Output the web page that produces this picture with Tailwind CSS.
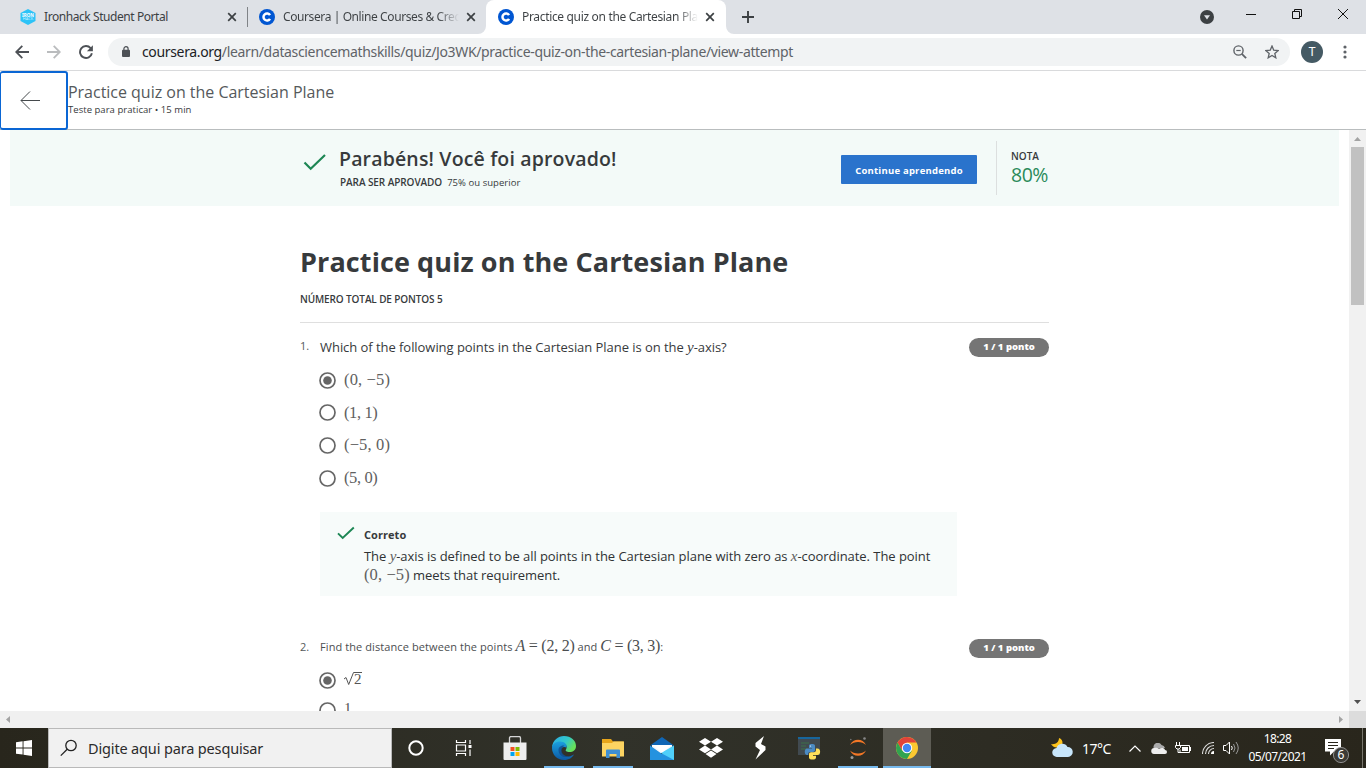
<!DOCTYPE html>
<html lang="pt-BR">
<head>
<meta charset="utf-8">
<title>Practice quiz on the Cartesian Plane</title>
<script src="https://cdn.jsdelivr.net/npm/@tailwindcss/browser@4"></script>
</head>
<body class="w-[1366px] h-[768px] overflow-hidden bg-white font-['Open_Sans',sans-serif] text-[#373a3c] flex flex-col whitespace-nowrap">

<!-- Tab strip -->
<div class="h-[34px] shrink-0 bg-[#dee1e6] flex text-[12px] text-[#3c4043] font-['Noto_Sans',sans-serif]">
  <div class="w-[248px] flex items-center pl-5 relative">
    <svg class="w-4 h-4" viewBox="0 0 16 16"><path d="M8 0l7.5 4v8L8 16 .5 12V4z" fill="#2dc3f7"/><text x="8" y="7.6" font-size="4.5" font-weight="700" text-anchor="middle" fill="#fff">IRON</text><text x="8" y="11.4" font-size="4" text-anchor="middle" fill="#c9f0ff">HACK</text></svg>
    <span class="ml-2 w-[180px] tracking-[-0.43px]">Ironhack Student Portal</span>
    <svg class="w-[10px] h-[10px] ml-[3px]" viewBox="0 0 10 10"><path d="M1.2 1.2l7.6 7.6M8.8 1.2L1.2 8.8" stroke="#3c4043" stroke-width="1.7"/></svg>
    <i class="absolute right-0 top-[7px] w-px h-5 bg-[#808387]"></i>
  </div>
  <div class="w-[238px] flex items-center pl-[11px]">
    <svg class="w-4 h-4" viewBox="0 0 16 16"><circle cx="8" cy="8" r="8" fill="#0056d2"/><path d="M11 6.2A3.5 3.5 0 1 0 11 9.8" fill="none" stroke="#fff" stroke-width="2.5"/></svg>
    <span class="ml-2 w-[176px] overflow-hidden tracking-[-0.4px] bg-linear-to-r from-[#3c4043] from-88% to-transparent bg-clip-text text-transparent">Coursera | Online Courses &amp; Credentials</span>
    <svg class="w-[10px] h-[10px] ml-[7px]" viewBox="0 0 10 10"><path d="M1.2 1.2l7.6 7.6M8.8 1.2L1.2 8.8" stroke="#3c4043" stroke-width="1.7"/></svg>
  </div>
  <div class="w-[240px] flex items-center pl-3 bg-white rounded-t-lg relative">
    <svg class="absolute -left-2 bottom-0 w-2 h-2" viewBox="0 0 8 8"><path d="M8 0v8H0a8 8 0 0 0 8-8" fill="#fff"/></svg>
    <svg class="absolute -right-2 bottom-0 w-2 h-2" viewBox="0 0 8 8"><path d="M0 0v8h8A8 8 0 0 1 0 0" fill="#fff"/></svg>
    <svg class="w-4 h-4" viewBox="0 0 16 16"><circle cx="8" cy="8" r="8" fill="#0056d2"/><path d="M11 6.2A3.5 3.5 0 1 0 11 9.8" fill="none" stroke="#fff" stroke-width="2.5"/></svg>
    <span class="ml-2 w-[176px] overflow-hidden tracking-[-0.33px] bg-linear-to-r from-[#3c4043] from-88% to-transparent bg-clip-text text-transparent">Practice quiz on the Cartesian Plane</span>
    <svg class="w-[10px] h-[10px] ml-[7px]" viewBox="0 0 10 10"><path d="M1.2 1.2l7.6 7.6M8.8 1.2L1.2 8.8" stroke="#3c4043" stroke-width="1.7"/></svg>
  </div>
  <svg class="w-3 h-3 ml-4 mt-[11px]" viewBox="0 0 12 12"><path d="M6 0v12M0 6h12" stroke="#3c4043" stroke-width="1.9"/></svg>
  <svg class="ml-auto w-[14px] h-[14px] mt-[10px]" viewBox="0 0 14 14"><circle cx="7" cy="7" r="7" fill="#3c4043"/><path d="M4 5.2h6L7 9.6z" fill="#dee1e6"/></svg>
  <svg class="ml-8 w-[10px] h-[10px] mt-[9px]" viewBox="0 0 10 10"><path d="M0 5.5h10" stroke="#111"/></svg>
  <svg class="ml-9 w-[10px] h-[10px] mt-[9px]" viewBox="0 0 10 10"><path d="M.5 2.5h7v7h-7zM2.500 2.500v-2h7v7h-2" fill="none" stroke="#111"/></svg>
  <svg class="ml-9 mr-[18px] w-[10px] h-[10px] mt-[9px]" viewBox="0 0 10 10"><path d="M0 0l10 10M10 0L0 10" stroke="#111"/></svg>
</div>

<!-- Toolbar -->
<div class="h-[37px] shrink-0 border-b border-[#d9dadc] flex items-center pl-[15px]">
  <svg class="w-[14px] h-[14px]" viewBox="0 0 14 14"><path d="M14 7H1.500M7.300 .9L1.200 7l6.100 6.100" fill="none" stroke="#4d5156" stroke-width="1.8"/></svg>
  <svg class="w-[14px] h-[14px] ml-[18px]" viewBox="0 0 14 14"><path d="M0 7h12.500M6.700 .9L12.800 7l-6.100 6.100" fill="none" stroke="#babcbe" stroke-width="1.8"/></svg>
  <svg class="w-[14px] h-[14px] ml-[18px]" viewBox="0 0 14 14"><path d="M11.600 3.100A6 6 0 1 0 12.900 8.300" fill="none" stroke="#4d5156" stroke-width="1.9"/><path d="M13.900 .3v6H7.900z" fill="#4d5156"/></svg>
  <div class="ml-[15px] w-[1182px] h-7 rounded-full bg-[#f1f3f4] flex items-center pl-[14px]">
    <svg class="w-2 h-[11px] -mt-px" viewBox="0 0 8 11"><rect y="3.800" width="8" height="7.200" rx="1" fill="#4d5156"/><path d="M1.900 4V2.800a2.100 2.100 0 0 1 4.200 0V4" fill="none" stroke="#4d5156" stroke-width="1.200"/></svg>
    <span class="ml-3 -mt-px text-[14px] text-[#5f6368] font-['Noto_Sans',sans-serif] tracking-[-0.35px]"><span class="text-[#202124]">coursera.org</span>/learn/datasciencemathskills/quiz/Jo3WK/practice-quiz-on-the-cartesian-plane/view-attempt</span>
    <svg class="ml-auto w-[14px] h-[14px]" viewBox="0 0 14 14"><circle cx="5.500" cy="5.500" r="4.600" fill="none" stroke="#5f6368" stroke-width="1.400"/><path d="M8.800 8.800l4.300 4.300" stroke="#5f6368" stroke-width="1.800"/><path d="M3.300 5.500h4.400" stroke="#5f6368" stroke-width="1.200"/></svg>
    <svg class="ml-[18px] mr-[11px] w-[14px] h-[14px]" viewBox="0 0 14 14"><path d="M7 1l1.700 4.100 4.500.4-3.400 2.900 1 4.400L7 10.500l-3.800 2.300 1-4.400L.8 5.500l4.500-.4z" fill="none" stroke="#5f6368" stroke-width="1.300"/></svg>
  </div>
  <div class="ml-[11px] w-[22px] h-[22px] rounded-full bg-[#455a64] text-white text-[12px] flex items-center justify-center font-['Roboto',sans-serif]">T</div>
  <svg class="ml-5 w-1 h-[14px]" viewBox="0 0 4 14"><circle cx="2" cy="2" r="1.600" fill="#5f6368"/><circle cx="2" cy="7" r="1.600" fill="#5f6368"/><circle cx="2" cy="12" r="1.600" fill="#5f6368"/></svg>
</div>

<!-- Item header -->
<div class="h-[59px] shrink-0 border-b border-[#b9bdbe] flex">
  <div class="w-[68px] h-[59px] shrink-0 border-2 border-l-[1px] border-[#0a66d4] rounded-[3px] flex items-center justify-center pr-[8px] pb-[2px]">
    <svg class="w-5 h-5" viewBox="0 0 20 20"><path d="M20 10.500H1M10 1.500L1 10.500l9 9" fill="none" stroke="#45494c" stroke-width="1"/></svg>
  </div>
  <div class="flex flex-col pt-[10px]">
    <div class="h-[22px] leading-[22px] text-[16px] text-[#55595b] tracking-[-0.02px]">Practice quiz on the Cartesian Plane</div>
    <div class="h-[13px] leading-[13px] text-[9.500px] tracking-[0.04px] text-[#373a3c]">Teste para praticar • 15 min</div>
  </div>
</div>

<!-- Scrollable page -->
<div class="h-[581px] shrink-0 flex">
  <main class="w-[1349px] h-[581px] overflow-hidden">
    <section class="ml-[10px] w-[1329px] h-[76px] bg-[#f3faf8] flex pl-[293px]">
      <svg class="w-[24px] h-[20px] mt-[23px]" viewBox="0 0 24 20"><path d="M1.500 9.500l6.200 6.200L22 2" fill="none" stroke="#1d8654" stroke-width="2.200"/></svg>
      <div class="ml-[12px] w-[502px] pt-4">
        <h2 class="text-[19.500px] leading-[26px] font-semibold tracking-[0.16px]">Parabéns! Você foi aprovado!</h2>
        <p class="ml-px text-[10px] leading-[21px] tracking-[-0.08px]"><b class="font-semibold">PARA SER APROVADO</b><span class="ml-[5px] text-[9.500px] tracking-[0.05px]">75% ou superior</span></p>
      </div>
      <button class="mt-[25px] w-[136px] h-[29px] bg-[#2a73cc] rounded-[1px] text-white font-bold text-[9.500px] tracking-[0.22px] pt-[3px]">Continue aprendendo</button>
      <div class="ml-[19px] mt-[11px] h-[54px] border-l border-[#dcdfdf] pl-[14px]">
        <div class="mt-[8px] text-[10px] leading-[14px] font-semibold">NOTA</div>
        <div class="text-[19.500px] leading-[24px] text-[#2a8a5a] tracking-[-0.5px]">80%</div>
      </div>
    </section>

    <article class="ml-[300px] w-[749px]">
      <h1 class="pt-[36px] h-[76px] text-[27px] leading-[40px] font-bold tracking-[0.1px]">Practice quiz on the Cartesian Plane</h1>
      <div class="h-[41px] pt-[10px] border-b border-[#dfdfdf] text-[10px] leading-[14px] font-semibold tracking-[-0.12px]">NÚMERO TOTAL DE PONTOS 5</div>

      <section class="flex h-[300px]">
        <div class="w-5 pt-[15px] text-[11px] leading-[16px] text-[#55595b]">1.</div>
        <div class="w-[649px] pt-[14px]">
          <p class="h-[20px] leading-[20px] text-[13px] tracking-[-0.05px]">Which of the following points in the Cartesian Plane is on the <i class="font-['Liberation_Serif',serif] text-[15px]">y</i>-axis?</p>
          <div class="-ml-px pt-[7px] font-['Liberation_Serif',serif] text-[16.500px] text-[#606060]">
            <div class="h-[32.600px] flex items-center"><svg class="w-[17px] h-[17px] mr-2" viewBox="0 0 17 17"><circle cx="8.500" cy="8.500" r="7.500" fill="none" stroke="#666" stroke-width="1.700"/><circle cx="8.500" cy="8.500" r="4.300" fill="#666"/></svg><span class="tracking-[0.15px]">(0, −5)</span></div>
            <div class="h-[32.600px] flex items-center"><svg class="w-[17px] h-[17px] mr-2" viewBox="0 0 17 17"><circle cx="8.500" cy="8.500" r="7.500" fill="none" stroke="#666" stroke-width="1.700"/></svg><span class="tracking-[-0.4px]">(1, 1)</span></div>
            <div class="h-[32.600px] flex items-center"><svg class="w-[17px] h-[17px] mr-2" viewBox="0 0 17 17"><circle cx="8.500" cy="8.500" r="7.500" fill="none" stroke="#666" stroke-width="1.700"/></svg><span class="tracking-[0.15px]">(−5, 0)</span></div>
            <div class="h-[32.600px] flex items-center"><svg class="w-[17px] h-[17px] mr-2" viewBox="0 0 17 17"><circle cx="8.500" cy="8.500" r="7.500" fill="none" stroke="#666" stroke-width="1.700"/></svg><span class="tracking-[-0.4px]">(5, 0)</span></div>
          </div>
          <div class="mt-[18px] w-[637px] h-[84px] bg-[#f7fbfa] flex pl-[17px]">
            <svg class="w-[18px] h-[15px] mt-[14px]" viewBox="0 0 18 15"><path d="M1 7.300l4.700 4.700L16.800 1.500" fill="none" stroke="#1d8654" stroke-width="1.900"/></svg>
            <div class="ml-[9px] pt-[14px]">
              <div class="h-[21px] leading-[18px] text-[11px] font-bold tracking-[0.05px]">Correto</div>
              <p class="leading-[19px] text-[13px] text-[#2f3234] tracking-[-0.06px]"><span class="tracking-[-0.05px]">The <i class="font-['Liberation_Serif',serif] text-[15px] leading-none text-[#606060]">y</i>-axis is defined to be all points in the Cartesian plane with zero as <i class="font-['Liberation_Serif',serif] text-[15px] leading-none text-[#606060]">x</i>-coordinate. The point</span><br><span class="font-['Liberation_Serif',serif] text-[16.500px] leading-none text-[#606060] tracking-[0.1px]">(0, −5)</span> meets that requirement.</p>
            </div>
          </div>
        </div>
        <div class="mt-[15px] w-[80px] h-[19px] rounded-full bg-[#757575] text-white text-[9.500px] leading-[18px] font-extrabold text-center">1 / 1 ponto</div>
      </section>

      <section class="flex h-[100px]">
        <div class="w-5 pt-[16px] text-[11px] leading-[16px] text-[#55595b]">2.</div>
        <div class="w-[649px] pt-[14px]">
          <p class="h-[20px] leading-[20px] text-[11px] text-[#4b4e50] tracking-[0.09px]">Find the distance between the points <span class="font-['Liberation_Serif',serif] text-[16px] leading-none tracking-[-0.25px]"><i>A</i> = (2, 2)</span> and <span class="font-['Liberation_Serif',serif] text-[16px] leading-none tracking-[-0.25px]"><i>C</i> = (3, 3)</span>:</p>
          <div class="-ml-px pt-[8px] font-['Liberation_Serif',serif] text-[15px] text-[#555]">
            <div class="h-[31px] flex items-center"><svg class="w-[17px] h-[17px] mr-2" viewBox="0 0 17 17"><circle cx="8.500" cy="8.500" r="7.500" fill="none" stroke="#666" stroke-width="1.700"/><circle cx="8.500" cy="8.500" r="4.300" fill="#666"/></svg><svg class="w-[10px] h-[13px] mb-[4px]" viewBox="0 0 10 13"><path d="M0 7l2-1.500L4.700 12.500 9.500 .5h.5" fill="none" stroke="#555" stroke-width="1"/></svg><span class="border-t border-[#555] leading-[12px] h-[13px] mb-[4px]">2</span></div>
            <div class="h-[31px] flex items-center pb-[2px]"><svg class="w-[17px] h-[17px] mr-2" viewBox="0 0 17 17"><circle cx="8.500" cy="8.500" r="7.500" fill="none" stroke="#666" stroke-width="1.700"/></svg><span class="mb-[4px]">1</span></div>
          </div>
        </div>
        <div class="mt-[16px] w-[80px] h-[19px] rounded-full bg-[#757575] text-white text-[9.500px] leading-[18px] font-extrabold text-center">1 / 1 ponto</div>
      </section>
    </article>
  </main>
  <div class="w-[17px] bg-[#f1f1f1] flex flex-col items-center">
    <svg class="w-[17px] h-[17px]" viewBox="0 0 17 17"><path d="M5 11l3.500-4 3.500 4z" fill="#a3a3a3"/></svg>
    <div class="w-[13px] h-[158px] bg-[#c1c1c1]"></div>
    <svg class="w-[17px] h-[17px] mt-auto" viewBox="0 0 17 17"><path d="M5 6l3.500 4L12 6z" fill="#505050"/></svg>
  </div>
</div>

<!-- Horizontal scrollbar -->
<div class="h-[17px] shrink-0 bg-[#f0f0f0] flex justify-between">
  <svg class="w-[17px] h-[17px]" viewBox="0 0 17 17"><path d="M10 5L6 8.500l4 3.500z" fill="#a3a3a3"/></svg>
  <div class="flex"><svg class="w-[17px] h-[17px]" viewBox="0 0 17 17"><path d="M7 5l4 3.500L7 12z" fill="#a3a3a3"/></svg><div class="w-[17px] h-[17px] bg-[#dcdcdc]"></div></div>
</div>

<!-- Taskbar -->
<div class="h-10 shrink-0 bg-linear-to-r from-[#28261c] from-0% via-[#31322a] via-45% to-[#29261c] flex">
  <div class="w-12 flex items-center justify-center"><svg class="w-4 h-4" viewBox="0 0 16 16"><path d="M0 2.200L6.600 1.300v6.200H0zM7.500 1.200L16 0v7.500H7.500zM0 8.400h6.600v6.200L0 13.700zM7.500 8.400H16V16l-8.500-1.200z" fill="#fff"/></svg></div>
  <div class="w-[344px] bg-[#f1f1f1] border border-[#b9b9b9] flex items-center pl-[11px]">
    <svg class="w-[18px] h-[18px]" viewBox="0 0 18 18"><circle cx="11" cy="6.500" r="5.200" fill="none" stroke="#222" stroke-width="1.300"/><path d="M7.200 10.200L.8 16.600" stroke="#222" stroke-width="1.300"/></svg>
    <span class="ml-[10px] mt-px text-[14.500px] text-[#2b2b2b] font-['Noto_Sans',sans-serif] tracking-[-0.15px]">Digite aqui para pesquisar</span>
  </div>
  <div class="w-[49px] flex items-center justify-center pr-px"><svg class="w-4 h-4" viewBox="0 0 16 16"><circle cx="8" cy="8" r="6.700" fill="none" stroke="#fff" stroke-width="2"/></svg></div>
  <div class="w-[49px] flex items-center justify-center pr-1"><svg class="w-[17px] h-4" viewBox="0 0 17 16"><path d="M1.500 0v2.500h9V0M1.500 16v-2.500h9V16M1.500 5h9v6h-9zM15 0v4M15 9.500V16" fill="none" stroke="#fff" stroke-width="1.200"/><rect x="13.500" y="5" width="3" height="3" fill="#fff"/></svg></div>
  <div class="w-[49px] flex items-center justify-center"><svg class="w-6 h-6" viewBox="0 0 24 24"><path d="M6.500 7V2a1.500 1.500 0 0 1 1.500-1.500h8A1.500 1.500 0 0 1 17.500 2V7" fill="none" stroke="#d5d5d5" stroke-width="1.300"/><path d="M.5 6.500h23V23a1 1 0 0 1-1 1h-21a1 1 0 0 1-1-1z" fill="#eee"/><path fill="#f25022" d="M7.500 11h4v4h-4z"/><path fill="#7fba00" d="M12.500 11h4v4h-4z"/><path fill="#00a4ef" d="M7.500 16h4v4h-4z"/><path fill="#ffb900" d="M12.500 16h4v4h-4z"/></svg></div>
  <div class="w-[49px] flex items-center justify-center relative">
    <svg class="w-6 h-6" viewBox="0 0 24 24"><defs><linearGradient id="eg" x1="0" y1="0" x2="1" y2=".5"><stop offset="0" stop-color="#2aa9e8"/><stop offset=".6" stop-color="#32c8ca"/><stop offset="1" stop-color="#67e05a"/></linearGradient><linearGradient id="eb" x1="0" y1="0" x2="0" y2="1"><stop offset="0" stop-color="#1ba0df"/><stop offset="1" stop-color="#0c59a4"/></linearGradient></defs><path d="M0 11C1 4 6 0 12 0c7 0 12 4.500 12 10 0 4-3 6-6.500 6-3 0-4.500-1-3.500-2.500C16 10 13.500 7 9 7c-5 0-8 3-9 4z" fill="url(#eg)"/><path d="M0 12c0-4 4-6.500 8-6.500 4.500 0 7.500 3 6.500 6C11 10 9 12 9 14.500c0 4 4 6.500 8 6 2-.2 4-1.500 5-2.300C20.500 21.500 17 24 12 24 5 24 0 18.500 0 12z" fill="url(#eb)"/><path d="M6.500 14c0-3.500 3.500-5 6-4.500-5 3.500-3 10.500 4 11-6 2-10-2-10-6.500z" fill="#114a8b" opacity=".75"/></svg>
    <i class="absolute bottom-0 left-[5px] w-10 h-[2px] bg-[#76b9ed]"></i></div>
  <div class="w-[49px] flex items-center justify-center relative">
    <svg class="w-[22px] h-[19px]" viewBox="0 0 22 19"><path d="M0 0h9l2 2.500h10.500V8H0z" fill="#e7a51b"/><path d="M0 4h10l1.500-1.500H22V17.500H0z" fill="#fcd462"/><path d="M4 19v-7.500a1 1 0 0 1 1-1h12a1 1 0 0 1 1 1V19h-3.500v-4h-7v4z" fill="#3e8fd2"/></svg>
    <i class="absolute bottom-0 left-[5px] w-10 h-[2px] bg-[#76b9ed]"></i></div>
  <div class="w-[49px] flex items-center justify-center"><svg class="w-6 h-[23px]" viewBox="0 0 24 23"><path d="M0 8.500L12 0l12 8.500z" fill="#1066b5"/><path d="M2 8h20v8H2z" fill="#f2f7fc"/><path d="M0 8.500L12 17 24 8.500V23H0z" fill="#2492df"/><path d="M24 8.500V23L11 16z" fill="#50d0fa"/><path d="M2 8h20L12 15.500z" fill="#fff"/></svg></div>
  <div class="w-[49px] flex items-center justify-center"><svg class="w-6 h-5" viewBox="0 0 24 20"><path d="M6 0l6 3.800-6 3.800-6-3.800zM18 0l6 3.800-6 3.800-6-3.800zM6 7.600l6 3.800-6 3.800-6-3.800zM18 7.600l6 3.800-6 3.800-6-3.800zM12 12.500l5.500 3.500-5.500 3.700L6.500 16z" fill="#fff"/></svg></div>
  <div class="w-[49px] flex items-center justify-center"><svg class="w-3 h-6" viewBox="0 0 12 24"><path d="M10 0L1.500 7v3.500L6 14l-4.500 9.500L11.500 14v-3.500L7 8z" fill="#fff"/></svg></div>
  <div class="w-[49px] flex items-center justify-center"><svg class="w-6 h-6" viewBox="0 0 24 24"><path fill="#414a50" d="M1 1h22v18H1z"/><path fill="#17669c" d="M1 1h22v2H1z"/><path d="M4 7h8M4 10h5M4 13h6" stroke="#3c7048" stroke-width="1.200"/><path d="M12 12V9.500c0-2 6-2 6 0V14c0 1-1 2-2 2h-3c-1.500 0-2 1-2 3h-1c-3 0-3-6.500 0-6.500h5V12z" fill="#4b8bc4"/><path d="M19 12.500h1.500c3.500 0 3.500 6.500 0 6.500H16v.7h3v2c0 2.500-7 2.500-7 0V18c0-1 1-1.800 2-1.800h3c1.500 0 2-1.200 2-2.200z" fill="#ffdf5a"/><circle cx="13.500" cy="10" r=".6" fill="#fff"/></svg></div>
  <div class="w-[49px] flex items-center justify-center relative">
    <svg class="w-[18px] h-[22px]" viewBox="0 0 18 22"><path d="M1 8C4 1 14 1 17 8 13 4 5 4 1 8zM1 13.500c3 7 13 7 16 0-4 4-12 4-16 0z" fill="#f37726"/><circle cx="15.500" cy="1.500" r="1.300" fill="#888"/><circle cx="3" cy="20.500" r="1.500" fill="#9b9b9b"/><circle cx="1.800" cy="2.500" r=".8" fill="#777"/></svg>
    <i class="absolute bottom-0 left-[5px] w-10 h-[2px] bg-[#76b9ed]"></i></div>
  <div class="ml-px w-12 flex items-center justify-center bg-[#5d5c54] relative"><svg class="w-[22px] h-[22px]" viewBox="0 0 22 22"><circle cx="11" cy="11" r="11" fill="#fbc831"/><path d="M1.500 5.500A11 11 0 0 1 20.500 5.600H11L6.200 13.700z" fill="#e0433a"/><path d="M1.500 5.500A11 11 0 0 0 11 22l4.800-8.200H6.200z" fill="#31a350"/><circle cx="11" cy="11" r="5.200" fill="#fff"/><circle cx="11" cy="11" r="4.200" fill="#4086f4"/></svg>
    <i class="absolute bottom-0 left-0 w-12 h-[2px] bg-[#76b9ed]"></i></div>
  <div class="ml-auto flex items-center text-white font-['Noto_Sans',sans-serif]">
    <svg class="w-[22px] h-5" viewBox="0 0 22 20"><path d="M8 0c5 1 5 10-2 9.500C3 9.300 1 8 0 6c4 1 8-1.500 8-6z" fill="#fcc21b"/><path d="M6 19a4.500 4.500 0 0 1-.5-9 6 6 0 0 1 11-1A5 5 0 0 1 17 19z" fill="#c7e5fa"/></svg>
    <span class="ml-[9px] w-[47px] text-[14px] tracking-[-0.5px]">17°C</span>
    <svg class="w-3 h-[7px]" viewBox="0 0 12 7"><path d="M.5 6.500L6 1l5.500 5.500" fill="none" stroke="#fff" stroke-width="1.200"/></svg>
    <svg class="ml-[10px] w-4 h-[11px]" viewBox="0 0 16 11"><path d="M3 6a4 4 0 0 1 7.500-4A4 4 0 0 1 14 5z" fill="#aaa"/><path d="M3 11a3 3 0 0 1 .5-6c2-.5 3 0 4.500 1 2-1.500 5.500-1.200 6 1a2 2 0 0 1 0 4z" fill="#eee"/></svg>
    <svg class="ml-2 w-4 h-3" viewBox="0 0 16 12"><path d="M5 3.500h9.500v7H5v-3M1.500 0v3M4.500 0v3M.5 3.500h5v2L4 7H2L.5 5.500zM3 7v3.500h3" fill="none" stroke="#fff"/><path d="M7 5h6v4H7zM15 5h1v4h-1z" fill="#fff"/></svg>
    <svg class="ml-[11px] w-3 h-3" viewBox="0 0 12 12"><path d="M.5 12A11.500 11.500 0 0 1 12 .5M3.500 12A8.500 8.500 0 0 1 12 3.500M6.500 12A5.500 5.500 0 0 1 12 6.500" fill="none" stroke="#ddd" stroke-width="1.100"/><path d="M12 9v3H9a3 3 0 0 1 3-3" fill="#fff"/></svg>
    <svg class="ml-[9px] w-4 h-[14px]" viewBox="0 0 16 14"><path d="M.5 4.500h2.500L6.500 1v12L3 9.500H.5z" fill="none" stroke="#fff"/><path d="M8.500 5q1.500 2 0 4" fill="none" stroke="#fff"/><path d="M10.500 3q3 4 0 8M13 1q4.500 6 0 12" fill="none" stroke="#999"/></svg>
    <div class="ml-[9px] mr-px w-[59px] text-center text-[12px] leading-[18px] tracking-[-0.6px]"><div>18:28</div><div>05/07/2021</div></div>
    <div class="relative ml-[17px] mt-[5px] w-6 h-6 mr-[13px]">
      <svg class="w-6 h-6" viewBox="0 0 24 24"><path d="M0 0h16v12.500H9l-4 4v-4H0z" fill="#fff"/><path d="M3 3.500h10M3 6.500h10M3 9.500h6" stroke="#29261c"/><circle cx="16" cy="16" r="7.600" fill="#3c3b36" stroke="#999" stroke-width=".9"/></svg>
      <span class="absolute left-2 top-[9px] w-4 text-center text-[12px] leading-[14px]">6</span>
    </div>
    <i class="w-px h-10 bg-[#77756c] mr-[3px]"></i>
  </div>
</div>
</body>
</html>
